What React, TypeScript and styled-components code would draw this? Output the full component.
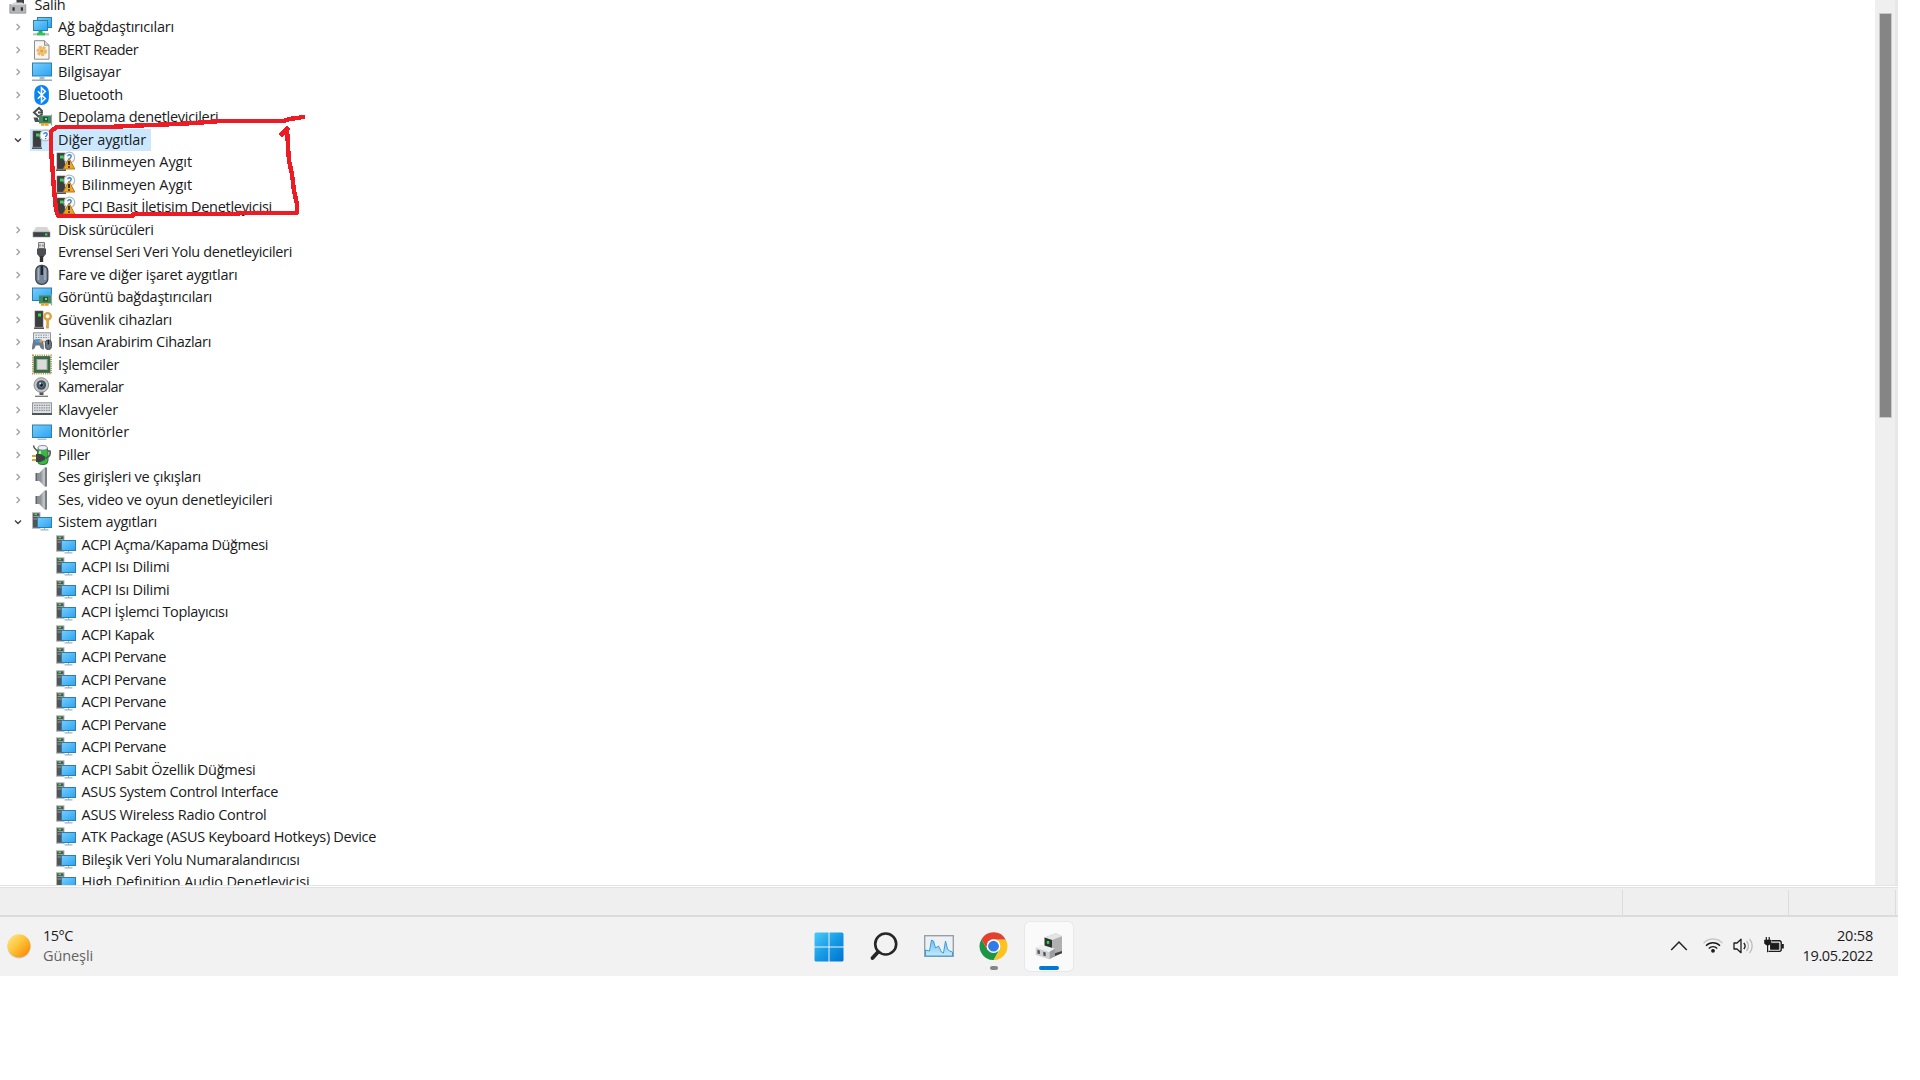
import React, { useLayoutEffect, useRef, useState } from 'react';
import styled, { createGlobalStyle, css } from 'styled-components';

const Global = createGlobalStyle`
  html, body { margin: 0; padding: 0; background: #fff; overflow: hidden; }
  * { box-sizing: border-box; }
`;

const Screen = styled.div`
  width: 1898px;
  height: 976px;
  display: flex;
  flex-direction: column;
  font-family: 'Open Sans', 'Noto Sans', sans-serif;
  font-size: 14.5px;
  color: #1a1a1a;
  background: #fff;
`;

const Viewport = styled.div`
  position: relative;
  display: flex;
  height: 885px;
  overflow: hidden;
`;

const Tree = styled.div`
  flex: 1;
  margin-top: -6.4px;
  display: flex;
  flex-direction: column;
`;

const Row = styled.div<{ $level: number }>`
  flex: none;
  height: 22.5px;
  display: flex;
  align-items: center;
  padding-left: ${p => [8.5, 12, 53.5][p.$level]}px;
`;

const Arrow = styled.svg`
  width: 12px;
  height: 12px;
  margin-right: 6px;
  flex: none;
`;

const Item = styled.div<{ $root?: boolean; $selected?: boolean }>`
  height: 22px;
  display: flex;
  align-items: center;
  padding: 0 5px 0 ${p => (p.$root ? 0 : 2)}px;
  ${p => p.$selected && css`background: #cce8ff;`}
`;

const IconSvg = styled.svg`
  width: 20px;
  height: 20px;
  flex: none;
  margin-right: 6px;
  overflow: visible;
`;

const TextSpan = styled.span`
  white-space: pre;
  line-height: 20px;
`;

const Scrollbar = styled.div`
  width: 23px;
  padding: 13px 0 0 4px;
  background: #efefef;
  border-right: 3px solid #e7e7e7;
`;

const Thumb = styled.div`
  width: 13px;
  height: 405px;
  background: #858585;
  border: 1px solid #c8c8c8;
`;

const Annotation = styled.svg`
  position: absolute;
  left: 0;
  top: 0;
  width: 320px;
  height: 230px;
  pointer-events: none;
`;

const StatusBar = styled.div`
  height: 32px;
  display: flex;
  border-top: 1px solid #e3e3e3;
  border-bottom: 2px solid #dcdcdc;
  background: #efefef;
  box-shadow: inset 0 1px #fff, inset 0 2px #e1e1e1;
  padding-top: 4px;
`;

const StatusPane = styled.div<{ $w: number }>`
  width: ${p => p.$w}px;
  border-right: 1px solid #dcdcdc;
`;

const Taskbar = styled.div`
  height: 59px;
  display: flex;
  background: #f2f2f2;
`;

const Weather = styled.div`
  width: 804.5px;
  display: flex;
  align-items: center;
  padding: 0 0 1px 5px;
  gap: 10px;
`;

const TwoLines = styled.div<{ $right?: boolean }>`
  display: flex;
  flex-direction: column;
  align-items: ${p => (p.$right ? 'flex-end' : 'flex-start')};
`;

const Muted = styled.span`
  color: #636363;
`;

const Apps = styled.div`
  display: flex;
  gap: 7px;
  padding-top: 5px;
`;

const AppButton = styled.div<{ $active?: boolean }>`
  width: 48px;
  height: 49px;
  display: flex;
  flex-direction: column;
  align-items: center;
  border-radius: 5px;
  padding-top: 9px;
  ${p => p.$active && css`background: #fafafa; box-shadow: 0 0 0 1px #e8e8e8;`}
`;

const AppIcon = styled.svg`
  width: 32px;
  height: 32px;
  flex: none;
`;

const Indicator = styled.div<{ $active?: boolean }>`
  width: ${p => (p.$active ? 20 : 8)}px;
  height: 4px;
  margin-top: 3px;
  border-radius: 2px;
  background: ${p => (p.$active ? '#0078d4' : '#868686')};
`;

const Tray = styled.div`
  flex: 1;
  display: flex;
  justify-content: flex-end;
  align-items: center;
  padding: 0 25px 2px 0;
`;

const TrayIcon = styled.svg<{ $gap: number }>`
  width: 22px;
  height: 22px;
  margin-right: ${p => p.$gap}px;
`;

/* Text tracked so that it fills the given width. */
function Label({ text, width }: { text: string; width: number }) {
  const ref = useRef<HTMLSpanElement>(null);
  const [spacing, setSpacing] = useState(0);
  useLayoutEffect(() => {
    const el = ref.current;
    if (el) setSpacing((width - el.getBoundingClientRect().width) / text.length);
  }, [text, width]);
  return <TextSpan ref={ref} style={{ letterSpacing: spacing }}>{text}</TextSpan>;
}

const Panel = ({ x, y, w, h }: { x: number; y: number; w: number; h: number }) => (
  <rect x={x + 0.5} y={y + 0.5} width={w - 1} height={h - 1} fill="url(#glass)" stroke="#2f7fab" />
);

const Tower = ({ x = 2 }: { x?: number }) => (
  <g>
    <rect x={x} y="1" width="8" height="16" fill="#3b3d3e" stroke="#636363" strokeWidth=".6" />
    <path d={`M${x - 1} 18.2h10`} stroke="#555" strokeWidth="1.6" />
    <rect x={x + 3} y="3.5" width="3" height="3" fill="#2be043" />
  </g>
);

const Board = () => (
  <g>
    <rect x="7" y="8.5" width="12" height="8" fill="#3d8a5c" />
    <path d="M19.5 7.5v11" stroke="#9aa0a3" strokeWidth="1.2" />
    <rect x="11" y="10" width="5" height="4.5" fill="#235b3a" />
    <rect x="13" y="11" width="2" height="2" fill="#8fc79b" />
    <path d="M9 17.5h8" stroke="#f0a020" strokeWidth="2.6" strokeDasharray="3.4 .4" />
  </g>
);

const Speaker = () => (
  <g>
    <rect x="3.5" y="6" width="4" height="8" fill="#5e646b" />
    <path d="M7.5 6 13 .5v19L7.5 14z" fill="url(#metal)" stroke="#8e9297" strokeWidth=".5" />
    <path d="M13 .5h2v19h-2z" fill="#777c82" />
    <path d="M6 6v8" stroke="#b7bdc3" />
  </g>
);

const System = () => (
  <g>
    <rect x=".5" y=".8" width="7.5" height="15.4" fill="#515557" stroke="#b4b7b9" />
    <path d="M1.5 4.5h6M1.5 7h4" stroke="#999" />
    <rect x="2.5" y="1.6" width="2.5" height="1.6" fill="#3dda4b" />
    <Panel x={5} y={5} w={15} h={11} />
    <path d="M12.5 16v1.5M8.5 17.8h8" stroke="#9fb3c6" strokeWidth="1.2" />
  </g>
);

const Question = () => (
  <g>
    <circle cx="13.3" cy="5.5" r="5.4" fill="#f7f9fa" stroke="#b3babf" strokeWidth="1.2" />
    <path d="M11.8 4.3c.1-2.2 3.6-2 3.4.2-.1 1.2-1.6 1.2-1.6 2.6M13.6 8v1.2" fill="none" stroke="#2482cf" strokeWidth="1.3" />
  </g>
);

const icons: Record<string, React.ReactNode> = {
  root: (
    <g>
      <path d="M7.5 2h7.5v8H7.5z" fill="#3f4144" />
      <path d="M.8 9.5h16v8.7H.8z" fill="#b4b5b8" stroke="#8c8e91" strokeWidth=".7" />
      <path d="M1 10l4-2.5h8L17 10z" fill="#d6d7d8" />
      <path d="M3.5 12.2h2.2v3.6H3.5zM11.8 12.2H14v3.6h-2.2z" fill="#333" />
    </g>
  ),
  network: (
    <g>
      <Panel x={5} y={0} w={15} h={11} />
      <Panel x={1} y={3} w={15} h={11} />
      <path d="M8.5 14v3" stroke="#27b34a" strokeWidth="4" />
      <path d="M1 17.3h16" stroke="#b7c3bd" strokeWidth="2.2" />
      <path d="M5 17h8" stroke="#2fc656" strokeWidth="2.6" />
    </g>
  ),
  file: (
    <g>
      <path d="M2.5.7h10l4.5 4.5v14H2.5z" fill="#f7f6f4" stroke="#8d8d8d" />
      <path d="M12.5.7v4.5H17" fill="#ddd" stroke="#8d8d8d" />
      <circle cx="9.7" cy="11" r="4" fill="#f4c680" stroke="#efb75f" strokeWidth="2.6" strokeDasharray="2.6 1.3" />
      <circle cx="9.7" cy="11" r="1.6" fill="#e2a04a" />
    </g>
  ),
  computer: (
    <g>
      <Panel x={0} y={0.5} w={20} h={14} />
      <path d="M10 14.5v3" stroke="#a5b8c8" strokeWidth="5" />
      <path d="M0 18.2h20" stroke="#8ea3b4" strokeWidth="1.4" />
    </g>
  ),
  bluetooth: (
    <g>
      <rect x="2.3" y="0" width="14.6" height="20" rx="7" fill="#0a84f5" />
      <path d="M5.8 6.3l7.5 7.2-3.8 3.7V2.8l3.8 3.7-7.5 7.2" fill="none" stroke="#fff" strokeWidth="1.5" />
    </g>
  ),
  storage: (
    <g>
      <path d="M10.5 4.5 7 1 2 5.5l4.5 4 4-2.5M6 5.5h5" fill="none" stroke="#4b4e50" strokeWidth="2" />
      <path d="M1.5 10.5h4l2 4.5H3z" fill="#4b4e50" />
      <Board />
    </g>
  ),
  other: (
    <g>
      <Tower x={1} />
      <Question />
    </g>
  ),
  unknown: (
    <g>
      <Tower x={1} />
      <Question />
      <path d="M13 6.2 18.8 17H7.2z" fill="#eda52a" stroke="#b97911" strokeLinejoin="round" />
      <path d="M13 9v4M13 14.2v1.6" stroke="#222" strokeWidth="1.7" />
    </g>
  ),
  disk: (
    <g>
      <path d="M4 7h11l3 5H1z" fill="#d3d5d6" />
      <path d="M1 12h17v5H1z" fill="#3f4244" stroke="#8d9092" strokeWidth=".6" />
      <rect x="13" y="13.5" width="2.4" height="2" fill="#34e046" />
    </g>
  ),
  usb: (
    <g>
      <path d="M6.5.5h6v6h-6z" fill="#ddd" stroke="#777" />
      <path d="M8 2.5v2M11 2.5v2" stroke="#555" />
      <path d="M5 6.5h9v5.5l-2.5 3h-4L5 12z" fill="#4c4f52" />
      <path d="M9.5 14v6" stroke="#333" strokeWidth="3.4" />
    </g>
  ),
  mouse: (
    <g>
      <rect x="3.8" y=".4" width="12" height="19" rx="5.5" fill="#75859a" stroke="#3c434b" strokeWidth="1.3" />
      <path d="M6.5 3v12M13 3v12" stroke="#a3b1c2" strokeWidth="1.5" />
      <path d="M9.8 1v9" stroke="#20262c" strokeWidth="2.6" />
    </g>
  ),
  display: (
    <g>
      <Panel x={0} y={0.5} w={20} h={13.5} />
      <Board />
    </g>
  ),
  security: (
    <g>
      <Tower x={3} />
      <circle cx="15.6" cy="6.3" r="3.2" fill="none" stroke="#d9a543" strokeWidth="2.4" />
      <path d="M15.6 9v9.5M14 17h2" stroke="#d9a543" strokeWidth="2.6" />
    </g>
  ),
  hid: (
    <g>
      <rect x="1.5" y=".8" width="17" height="9" fill="#e6e8ea" stroke="#92979b" />
      <path d="M3.5 3.2h13M3.5 5.5h13" stroke="#8b9196" strokeDasharray="1.5 1" />
      <path d="M2.5 7.5Q0 10 0 17.5q3 0 3.6-4h4q.8 4 4.4 4 0-8-2.5-10z" fill="#6f7a86" />
      <rect x="3.5" y="7" width="4.5" height="3.5" fill="#3da0f2" />
      <rect x="7.5" y="8" width="2.5" height="2.5" fill="#f09a35" />
      <rect x="13.4" y="8" width="6" height="9.5" rx="2.8" fill="#6c7885" stroke="#424a52" />
      <path d="M16.4 8v4.5" stroke="#222" strokeWidth="1.3" />
    </g>
  ),
  cpu: (
    <g>
      <rect x=".8" y=".3" width="18.4" height="18.4" fill="none" stroke="#b59a4c" strokeWidth="1.6" strokeDasharray="1.2 1" />
      <rect x="1.6" y="1.1" width="16.8" height="16.8" fill="#396b4b" />
      <rect x="5" y="4.5" width="10" height="10" fill="#d9dcd9" stroke="#a7b0a9" />
    </g>
  ),
  camera: (
    <g>
      <path d="M9.5 14v4" stroke="#555" strokeWidth="4" />
      <path d="M3 19.3h13" stroke="#777" strokeWidth="1.3" />
      <circle cx="9.3" cy="8" r="7.3" fill="#c4c7ca" stroke="#8b8e91" />
      <circle cx="9.3" cy="8" r="4.8" fill="#4b5258" />
      <circle cx="9.3" cy="8" r="2.2" fill="#18222e" stroke="#5a87b0" />
      <circle cx="8.2" cy="6.6" r="1" fill="#dcecf7" />
    </g>
  ),
  keyboard: (
    <g>
      <rect x=".5" y="2.8" width="19" height="11" fill="#dfe2e4" stroke="#90989e" />
      <path d="M2 5.3h16M2 7.8h16M2 10.3h16" stroke="#8c9297" strokeWidth="1.2" strokeDasharray="1.6 .8" />
      <path d="M0 14h20" stroke="#4e565c" strokeWidth="2" />
    </g>
  ),
  monitor: (
    <g>
      <Panel x={0} y={2.5} w={20} h={13.5} />
      <path d="M5.5 17.2h9" stroke="#a9b9c6" strokeWidth="1.4" />
    </g>
  ),
  battery: (
    <g>
      <rect x="5.5" y="2" width="10.5" height="17.5" rx="4" fill="#37b83f" stroke="#2f7636" />
      <path d="M8 6v4" stroke="#a2eda0" strokeWidth="2" />
      <ellipse cx="10.7" cy="2.8" rx="4.7" ry="2.3" fill="#eceef8" stroke="#84879b" />
      <path d="M1.5.5C2 5 5 4 6 7M12 13c4 0 7-2 6-7h-2" fill="none" stroke="#55595c" strokeWidth="1.6" />
      <path d="M0 11h5M0 15h5" stroke="#dba432" strokeWidth="2" />
      <path d="M4 9h4.5l4.5 2.4v3.4L8.5 17H4z" fill="#3e4245" />
    </g>
  ),
  speaker: <Speaker />,
  system: <System />,
};

type Node = { t: string; w: number; icon: string; level?: number; open?: boolean; selected?: boolean };

const nodes: Node[] = [
  { t: 'Salih', w: 31, icon: 'root', level: 0 },
  { t: 'Ağ bağdaştırıcıları', w: 116, icon: 'network' },
  { t: 'BERT Reader', w: 80, icon: 'file' },
  { t: 'Bilgisayar', w: 63, icon: 'computer' },
  { t: 'Bluetooth', w: 65, icon: 'bluetooth' },
  { t: 'Depolama denetleyicileri', w: 160.5, icon: 'storage' },
  { t: 'Diğer aygıtlar', w: 88, icon: 'other', open: true, selected: true },
  { t: 'Bilinmeyen Aygıt', w: 110.5, icon: 'unknown', level: 2 },
  { t: 'Bilinmeyen Aygıt', w: 110.5, icon: 'unknown', level: 2 },
  { t: 'PCI Basit İletişim Denetleyicisi', w: 190.5, icon: 'unknown', level: 2 },
  { t: 'Disk sürücüleri', w: 95.5, icon: 'disk' },
  { t: 'Evrensel Seri Veri Yolu denetleyicileri', w: 234, icon: 'usb' },
  { t: 'Fare ve diğer işaret aygıtları', w: 179.5, icon: 'mouse' },
  { t: 'Görüntü bağdaştırıcıları', w: 154, icon: 'display' },
  { t: 'Güvenlik cihazları', w: 114, icon: 'security' },
  { t: 'İnsan Arabirim Cihazları', w: 153, icon: 'hid' },
  { t: 'İşlemciler', w: 61, icon: 'cpu' },
  { t: 'Kameralar', w: 65.5, icon: 'camera' },
  { t: 'Klavyeler', w: 60, icon: 'keyboard' },
  { t: 'Monitörler', w: 71, icon: 'monitor' },
  { t: 'Piller', w: 32, icon: 'battery' },
  { t: 'Ses girişleri ve çıkışları', w: 143, icon: 'speaker' },
  { t: 'Ses, video ve oyun denetleyicileri', w: 214.5, icon: 'speaker' },
  { t: 'Sistem aygıtları', w: 99, icon: 'system', open: true },
  ...(
    [
      ['ACPI Açma/Kapama Düğmesi', 186.5],
      ['ACPI Isı Dilimi', 88],
      ['ACPI Isı Dilimi', 88],
      ['ACPI İşlemci Toplayıcısı', 146.5],
      ['ACPI Kapak', 72.5],
      ['ACPI Pervane', 84.5],
      ['ACPI Pervane', 84.5],
      ['ACPI Pervane', 84.5],
      ['ACPI Pervane', 84.5],
      ['ACPI Pervane', 84.5],
      ['ACPI Sabit Özellik Düğmesi', 174],
      ['ASUS System Control Interface', 196.5],
      ['ASUS Wireless Radio Control', 185],
      ['ATK Package (ASUS Keyboard Hotkeys) Device', 294.5],
      ['Bileşik Veri Yolu Numaralandırıcısı', 218],
      ['High Definition Audio Denetleyicisi', 228],
    ] as [string, number][]
  ).map(([t, w]) => ({ t, w, icon: 'system', level: 2 })),
];

function TreeRow({ node }: { node: Node }) {
  const level = node.level ?? 1;
  return (
    <Row $level={level}>
      {level === 1 && (
        <Arrow viewBox="0 0 12 12">
          {node.open
            ? <path d="M3 4.5l3 3 3-3" fill="none" stroke="#404040" strokeWidth="1.4" />
            : <path d="M4.6 3l3 3-3 3" fill="none" stroke="#a0a0a0" strokeWidth="1.3" />}
        </Arrow>
      )}
      <Item $root={level === 0} $selected={node.selected}>
        <IconSvg viewBox="0 0 20 20">{icons[node.icon]}</IconSvg>
        <Label text={node.t} width={node.w} />
      </Item>
    </Row>
  );
}

export default function App() {
  return (
    <>
      <Global />
      <Screen>
        <Viewport>
          <Tree>
            {nodes.map((n, i) => <TreeRow key={i} node={n} />)}
          </Tree>
          <Scrollbar><Thumb /></Scrollbar>
          <Annotation viewBox="0 0 320 230" fill="none" stroke="#ed1c24" strokeWidth="4.4" strokeLinejoin="bevel" strokeLinecap="square" shapeRendering="crispEdges">
            <path d="M303 117l-6 1-8 1-5 2h-63l-12 1-31 2-28 1-42 2H57l-6 4v19l2 25 1 15 2 20 2 6h74l2-2h100l8-1h55v-9l-3-13-2-17-3-13-1-15-1-17" />
            <path d="M287 129l-5 5" />
          </Annotation>
        </Viewport>
        <StatusBar>
          <StatusPane $w={1623} />
          <StatusPane $w={166} />
          <StatusPane $w={107} />
        </StatusBar>
        <Taskbar>
          <Weather>
            <svg width="28" height="28" viewBox="0 0 28 28">
              <circle cx="14" cy="14.8" r="11.6" fill="#000" opacity=".15" />
              <circle cx="14" cy="13.8" r="11.5" fill="url(#sun)" />
            </svg>
            <TwoLines>
              <Label text="15°C" width={30} />
              <Muted><Label text="Güneşli" width={50} /></Muted>
            </TwoLines>
          </Weather>
          <Apps>
            <AppButton>
              <AppIcon viewBox="0 0 32 32">
                <path d="M1.5 3a1.5 1.5 0 0 1 1.5-1.5h12.5v14h-14zM16.5 1.5H29A1.5 1.5 0 0 1 30.5 3v12.5h-14zM1.5 16.5h14v14H3A1.5 1.5 0 0 1 1.5 29zM16.5 16.5h14V29a1.5 1.5 0 0 1-1.5 1.5H16.5z" fill="url(#win)" />
              </AppIcon>
            </AppButton>
            <AppButton>
              <AppIcon viewBox="0 0 32 32" fill="none" stroke="#262626" strokeLinecap="round">
                <circle cx="17.7" cy="13" r="10.5" strokeWidth="2.6" />
                <path d="M10 21l-5.5 6" strokeWidth="3.8" />
              </AppIcon>
            </AppButton>
            <AppButton>
              <AppIcon viewBox="0 0 32 32">
                <rect x="1.7" y="4.7" width="28.6" height="20.6" fill="#eef1f4" stroke="#96a0ab" strokeWidth="1.4" />
                <path d="M2.5 19l4 1 2-11 2 1 2 7 3-2 3 6 2 1 2-12 2 8 2 2 3 1v4H2.5z" fill="url(#area)" stroke="#3f9bd8" strokeWidth="1" />
              </AppIcon>
            </AppButton>
            <AppButton>
              <AppIcon viewBox="0 0 32 32">
                <path d="M3.5 8.2A13.9 13.9 0 0 0 15.7 29.1L21.2 19l-5.7-4-5.8 4z" fill="#1e9447" />
                <path d="M15.5 8.4h12.2a13.9 13.9 0 0 1-12 20.7l6-10.4z" fill="#fcc31e" />
                <path d="M3.5 8.2A13.9 13.9 0 0 1 27.7 8.4H15.5a7 7 0 0 0-6 3.5l-.4 6z" fill="#e3402f" />
                <circle cx="15.5" cy="15.2" r="6.9" fill="#fff" />
                <circle cx="15.5" cy="15.2" r="5.4" fill="#2f7bea" />
              </AppIcon>
              <Indicator />
            </AppButton>
            <AppButton $active>
              <AppIcon viewBox="0 0 32 32">
                <path d="M11.5 6.5 23 2.3l6 3V21l-8 2.5-2-2z" fill="#aeb0b2" />
                <path d="M11.5 6.5 23 2.3l6 3L19 9z" fill="#e3e4e5" />
                <path d="M11.5 6.5 19 9v12l-7.5-3z" fill="#303235" />
                <rect x="13.8" y="10" width="2.4" height="2.8" fill="#29e23d" />
                <path d="M21 22.5l8-2.5v2.3L20 26z" fill="#3f4143" />
                <path d="M2.8 16.5 16.5 21v7.2L2.8 24z" fill="#cfd0d2" />
                <path d="M2.8 16.5 8 13.5l14 4.3-5.5 3.2z" fill="#f0f0f1" />
                <path d="M16.5 21l5.5-3.2v7.4l-5.5 3z" fill="#9b9da0" />
                <path d="M4.5 18.8l2.3.7v3.7l-2.3-.7zM10.3 20.8l2.4.7v3.7l-2.4-.7z" fill="#4c4f55" />
              </AppIcon>
              <Indicator $active />
            </AppButton>
          </Apps>
          <Tray>
            <TrayIcon $gap={12} viewBox="0 0 22 22" fill="none" stroke="#222">
              <path d="M3.2 15l7.8-8 7.8 8" strokeWidth="1.5" />
            </TrayIcon>
            <TrayIcon $gap={8} viewBox="0 0 22 22" fill="none" stroke="#1c1c1c" strokeWidth="1.4">
              <path d="M1.5 8.2a13 13 0 0 1 19 0" stroke="#c9c9c9" />
              <path d="M4 10.8a9.7 9.7 0 0 1 14 0M6.8 13.4a5.8 5.8 0 0 1 8.4 0" />
              <circle cx="11" cy="15.8" r="1.2" fill="#1c1c1c" />
            </TrayIcon>
            <TrayIcon $gap={9} viewBox="0 0 22 22" fill="none" stroke="#1c1c1c" strokeWidth="1.3">
              <path d="M2 8h3l4-3.7v13.4L5 14H2z" strokeLinejoin="round" />
              <path d="M11.8 8a4.5 4.5 0 0 1 0 6" />
              <path d="M14.5 6a7.5 7.5 0 0 1 0 10M17.5 4a10.5 10.5 0 0 1 0 14" stroke="#bbb" />
            </TrayIcon>
            <TrayIcon $gap={18} viewBox="0 0 22 22" fill="none" stroke="#1c1c1c">
              <path d="M3.3 2v4M6.2 2v4M4.6 9v8.2" strokeWidth="1.2" />
              <path d="M1.5 5h6.4v3.4L6 10H3.4L1.5 8.4z" fill="#1c1c1c" strokeWidth=".6" />
              <path d="M8.5 5.8H17l1.2 1.2v8.2L17 16.4H5.5" strokeWidth="1.4" />
              <rect x="7.6" y="8.2" width="8.2" height="6" fill="#1c1c1c" />
              <path d="M19.7 9v4.5" strokeWidth="2.2" />
            </TrayIcon>
            <TwoLines $right>
              <Label text="20:58" width={36} />
              <Label text="19.05.2022" width={70.5} />
            </TwoLines>
          </Tray>
        </Taskbar>
      </Screen>
      <svg width="0" height="0" aria-hidden="true">
        <defs>
          <linearGradient id="glass" x1="0" y1="0" x2="1" y2="1">
            <stop offset="0" stopColor="#79cdfc" />
            <stop offset="1" stopColor="#29a4f3" />
          </linearGradient>
          <linearGradient id="metal">
            <stop offset="0" stopColor="#7c8288" />
            <stop offset="1" stopColor="#d5d8da" />
          </linearGradient>
          <linearGradient id="sun" x1=".1" y1=".1" x2=".9" y2=".9">
            <stop offset="0" stopColor="#ffe07a" />
            <stop offset=".4" stopColor="#fdc83f" />
            <stop offset="1" stopColor="#fb8b05" />
          </linearGradient>
          <linearGradient id="win" x1="0" y1="0" x2="1" y2="1">
            <stop offset="0" stopColor="#4dcbfa" />
            <stop offset=".5" stopColor="#169be5" />
            <stop offset="1" stopColor="#0073d1" />
          </linearGradient>
          <linearGradient id="area" x1="0" y1="0" x2="0" y2="1">
            <stop offset="0" stopColor="#72c0ed" />
            <stop offset="1" stopColor="#c5eafd" />
          </linearGradient>
        </defs>
      </svg>
    </>
  );
}
